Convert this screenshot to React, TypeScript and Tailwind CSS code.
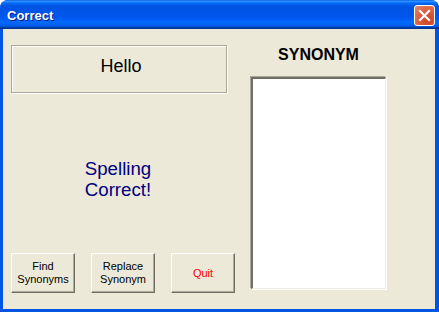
import React from "react";

function XPButton({ children, red }: { children: React.ReactNode; red?: boolean }) {
  return (
    <div
      className={
        "w-[64px] h-[40px] shrink-0 flex items-center justify-center text-center bg-[#ECE9D8] border-t border-l border-t-white border-l-white border-r border-b border-r-[#716F64] border-b-[#716F64] shadow-[inset_-1px_-1px_0_#ACA899] text-[11px] leading-[13px] " +
        (red ? "text-[#FF0000]" : "text-black")
      }
    >
      {children}
    </div>
  );
}

export default function App() {
  return (
    <div
      className="w-[439px] h-[312px] flex flex-col bg-[#0054E3] rounded-t-[8px] overflow-hidden"
      style={{ fontFamily: '"Liberation Sans", Arial, sans-serif' }}
    >
      <div className="h-[29px] shrink-0 flex items-center pl-[7px] pr-[4px] pt-[2px] bg-[linear-gradient(to_bottom,#0058EE_0%,#3593FF_4%,#288EFF_6%,#127DFF_8%,#036FFC_10%,#0262EE_14%,#0057E5_20%,#0054E3_24%,#0055EB_56%,#005BF5_66%,#026AFE_76%,#0062EF_86%,#0052D6_92%,#0040AB_94%,#003092_100%)]">
        <span className="text-white font-bold text-[13px] leading-none [text-shadow:1px_1px_0_#0A1883]">
          Correct
        </span>
        <div className="ml-auto w-[21px] h-[21px] rounded-[3px] border border-white bg-[radial-gradient(circle_at_70%_75%,#CC4426_0%,#DA5A3A_45%,#E6896A_100%)] flex items-center justify-center">
          <svg width="13" height="13" viewBox="0 0 13 13">
            <path d="M2 2 L11 11 M11 2 L2 11" stroke="white" strokeWidth="2.2" strokeLinecap="square" />
          </svg>
        </div>
      </div>
      <div className="flex-1 ml-[3px] mr-[4px] mb-[3px] bg-[#ECE9D8] flex">
        <div className="w-[232px] shrink-0 pl-[8px] pt-[16px] pb-[16px] flex flex-col">
          <div className="h-[48px] w-[216px] border border-[#ACA899] shadow-[inset_1px_1px_0_#fff,1px_1px_0_#fff] flex items-center justify-center text-[18px] leading-none text-black pl-[4px] pb-[6px]">
            Hello
          </div>
          <div className="w-[216px] flex-1 flex items-center justify-center pt-[12px]">
            <div className="text-center text-[18.67px] leading-[21px] text-[#000080] pr-[2px]">
              Spelling
              <br />
              Correct!
            </div>
          </div>
          <div className="flex gap-[16px]">
            <XPButton>
              Find
              <br />
              Synonyms
            </XPButton>
            <XPButton>
              Replace
              <br />
              Synonym
            </XPButton>
            <XPButton red>Quit</XPButton>
          </div>
        </div>
        <div className="ml-[16px] w-[135px] shrink-0 flex flex-col items-center pt-[17px]">
          <div className="text-[16px] leading-[18px] font-bold text-black">SYNONYM</div>
          <div className="mt-[13px] w-[135px] h-[212px] bg-white border-t-2 border-l-2 border-t-[#716F64] border-l-[#716F64] border-r border-b border-r-[#F1EFE2] border-b-[#F1EFE2] shadow-[-1px_-1px_0_#ACA899,1px_1px_0_#fff]" />
        </div>
      </div>
    </div>
  );
}
